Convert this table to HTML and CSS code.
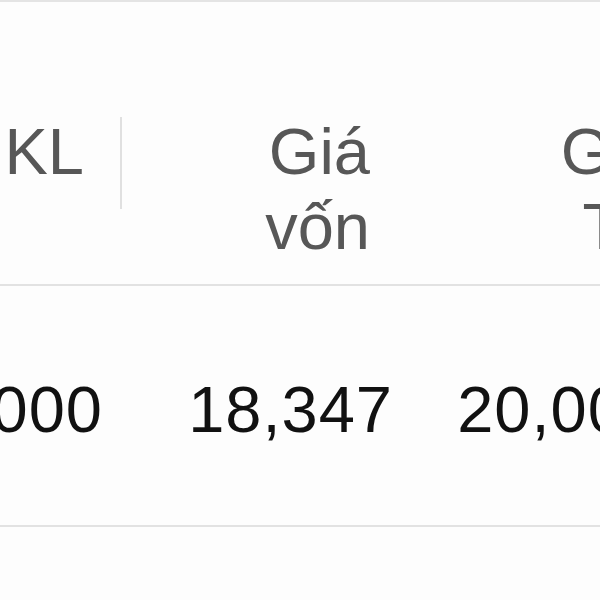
FILE: index.html
```html
<!DOCTYPE html>
<html lang="vi">
<head>
<meta charset="utf-8">
<link rel="stylesheet" href="styles.css">
</head>
<body>
<div class="table">
  <div class="row head">
    <div class="cell c1 divided">KL</div>
    <div class="cell c2">Giá<br>vốn</div>
    <div class="cell c3">Giá<br>TT</div>
  </div>
  <div class="row body">
    <div class="cell c1">1,000</div>
    <div class="cell c2">18,347</div>
    <div class="cell c3">20,000</div>
  </div>
</div>
</body>
</html>
```
FILE: styles.css
```css
html, body {
  margin: 0;
  padding: 0;
  background: #fdfdfd;
  overflow: hidden;
}
.table {
  margin-left: -98px;
  width: 880px;
  border-top: 2px solid #e4e4e4;
  font-family: "Liberation Sans", Arial, sans-serif;
  font-size: 65px;
  line-height: 75px;
}
.row {
  display: flex;
  border-bottom: 2px solid #e2e2e2;
}
.cell {
  box-sizing: border-box;
  text-align: right;
  white-space: nowrap;
  position: relative;
}
.c1 { width: 220px; }
.c2 { width: 290px; }
.c3 { width: 270px; }
.head {
  color: #575757;
  height: 284px;
  box-sizing: border-box;
  padding-top: 112px;
}
.head .c1 { padding-right: 38px; }
.head .c2 { padding-right: 42px; }
.head .c3 { padding-right: 20px; }
.divided::after {
  content: "";
  position: absolute;
  right: 0;
  top: 3px;
  width: 2px;
  height: 92px;
  background: #e0e0e0;
}
.body {
  color: #111;
  height: 241px;
  box-sizing: border-box;
  padding-top: 86px;
  letter-spacing: 1px;
}
.body .cell { padding-right: 19px; }
.body .c3 { padding-right: 20px; }
```
